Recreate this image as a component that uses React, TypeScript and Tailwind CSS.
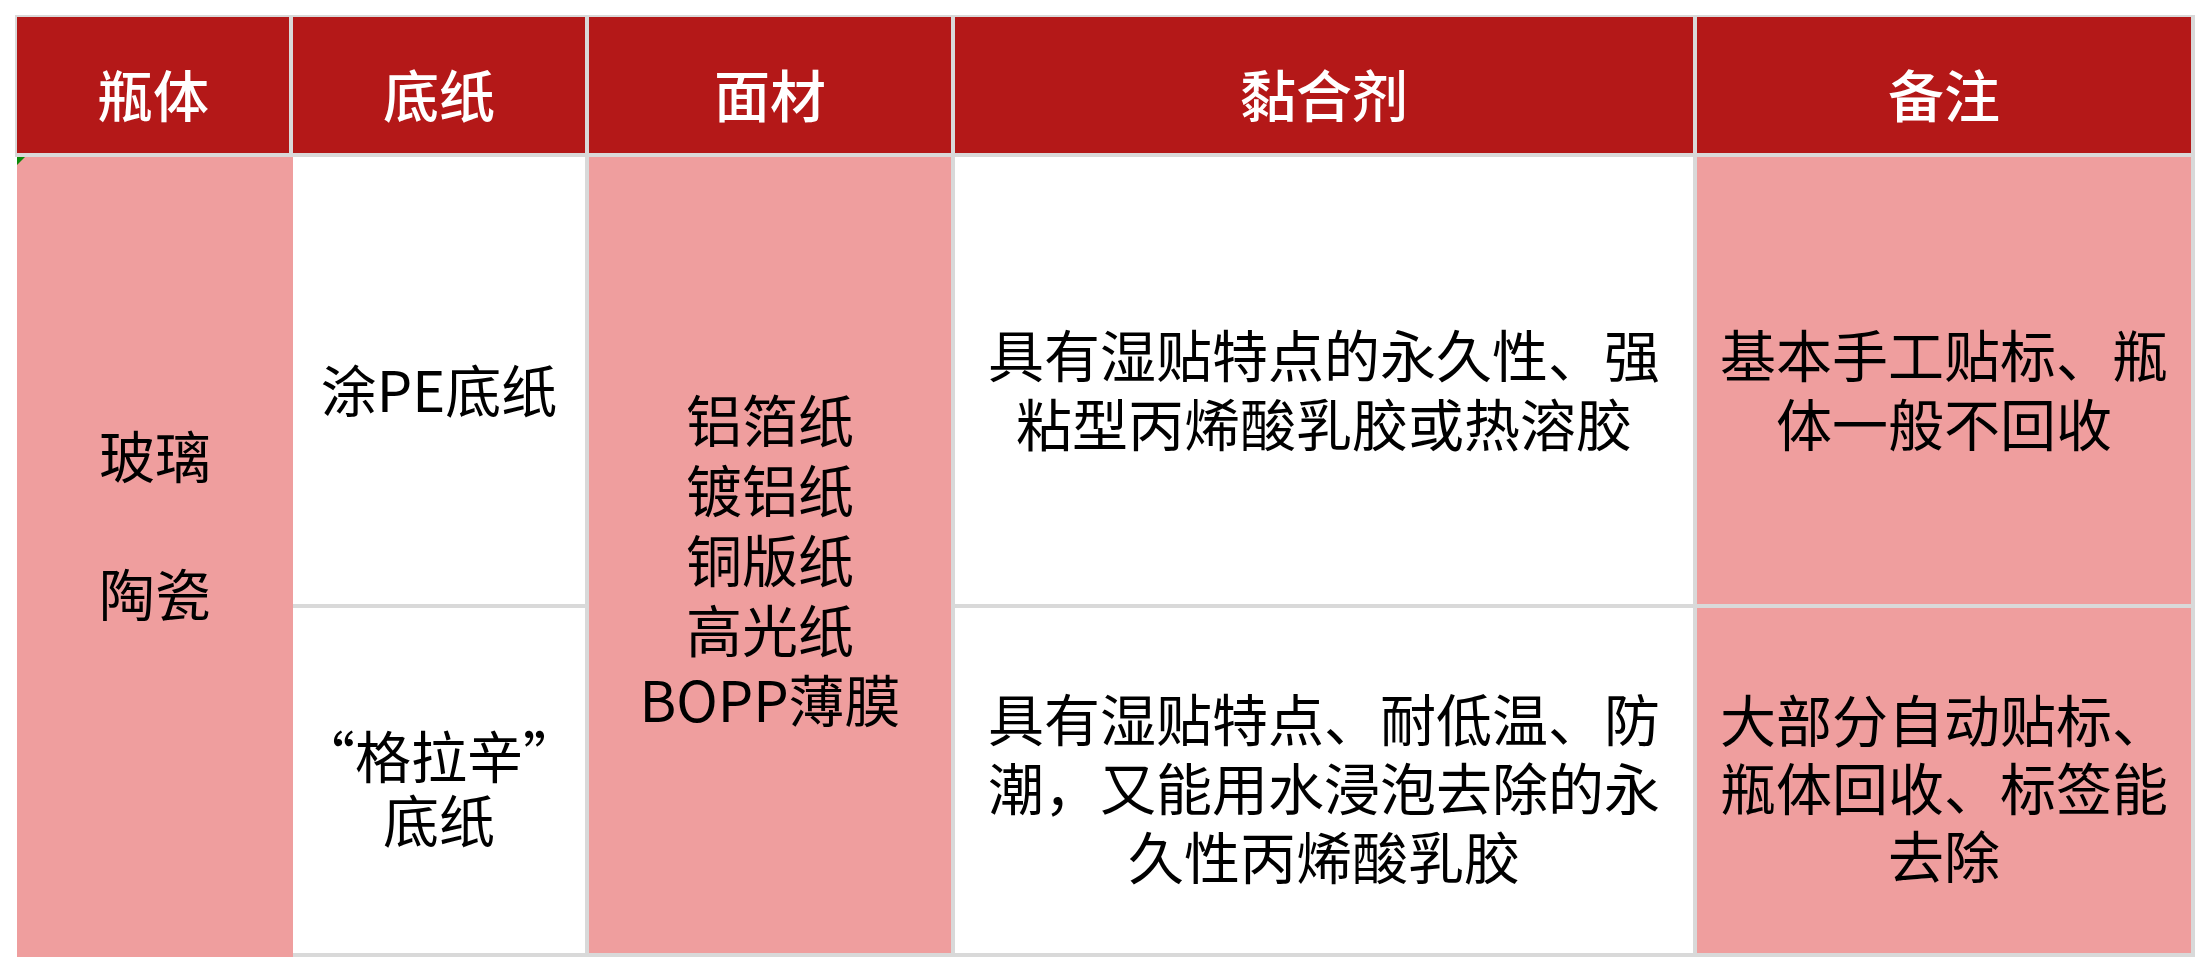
import React from "react";

const font = { fontFamily: '"Noto Sans CJK SC", "Noto Sans", sans-serif' };

function Head({ children }: { children: React.ReactNode }) {
  return (
    <div className="bg-[#b41818] text-white flex items-center justify-center text-[56px] leading-[69px] font-medium pt-[14px]">
      {children}
    </div>
  );
}

function Cell({
  children,
  pink,
  className = "",
}: {
  children: React.ReactNode;
  pink?: boolean;
  className?: string;
}) {
  return (
    <div
      className={`${pink ? "bg-[#ef9e9e]" : "bg-white"} text-black flex flex-col items-center justify-center text-center text-[56px] whitespace-nowrap ${className}`}
    >
      {children}
    </div>
  );
}

export default function App() {
  return (
    <div className="w-[2210px] h-[972px] bg-white pl-[15px] pt-[15px]" style={font}>
      <div className="grid grid-cols-[272px_292px_362px_738px_494px] grid-rows-[136px_447px_345px] gap-[4px] bg-[#d9d9d9] pl-[2px] pt-[2px] pr-[4px] pb-[4px] w-[2180px]">
        <Head>瓶体</Head>
        <Head>底纸</Head>
        <Head>面材</Head>
        <Head>黏合剂</Head>
        <Head>备注</Head>

        <div className="row-span-2 relative -ml-[2px] -mr-[4px] -mb-[4px] border-l-[2px] border-white bg-[#ef9e9e] text-black flex flex-col items-center justify-center text-[56px] leading-[69px]">
          <div className="absolute top-0 left-0 w-0 h-0 border-t-[8px] border-r-[8px] border-t-[#0a8a0a] border-r-transparent" />
          <div>玻璃</div>
          <div>&nbsp;</div>
          <div>陶瓷</div>
          <div>&nbsp;</div>
        </div>

        <Cell className="leading-[69px] pt-[14px]">涂PE底纸</Cell>

        <Cell pink className="row-span-2 leading-[70px] pt-[6px]">
          <div>铝箔纸</div>
          <div>镀铝纸</div>
          <div>铜版纸</div>
          <div>高光纸</div>
          <div>BOPP薄膜</div>
        </Cell>

        <Cell className="leading-[69px] pt-[12px]">
          <div>具有湿贴特点的永久性、强</div>
          <div>粘型丙烯酸乳胶或热溶胶</div>
        </Cell>

        <Cell pink className="leading-[69px] pt-[12px]">
          <div>基本手工贴标、瓶</div>
          <div>体一般不回收</div>
        </Cell>

        <Cell className="leading-[64px] pt-[10px]">
          <div>“格拉辛”</div>
          <div>底纸</div>
        </Cell>

        <Cell className="leading-[69px] pt-[10px]">
          <div>具有湿贴特点、耐低温、防</div>
          <div>潮，又能用水浸泡去除的永</div>
          <div>久性丙烯酸乳胶</div>
        </Cell>

        <Cell pink className="leading-[68px] pt-[10px]">
          <div>大部分自动贴标、</div>
          <div>瓶体回收、标签能</div>
          <div>去除</div>
        </Cell>
      </div>
    </div>
  );
}
